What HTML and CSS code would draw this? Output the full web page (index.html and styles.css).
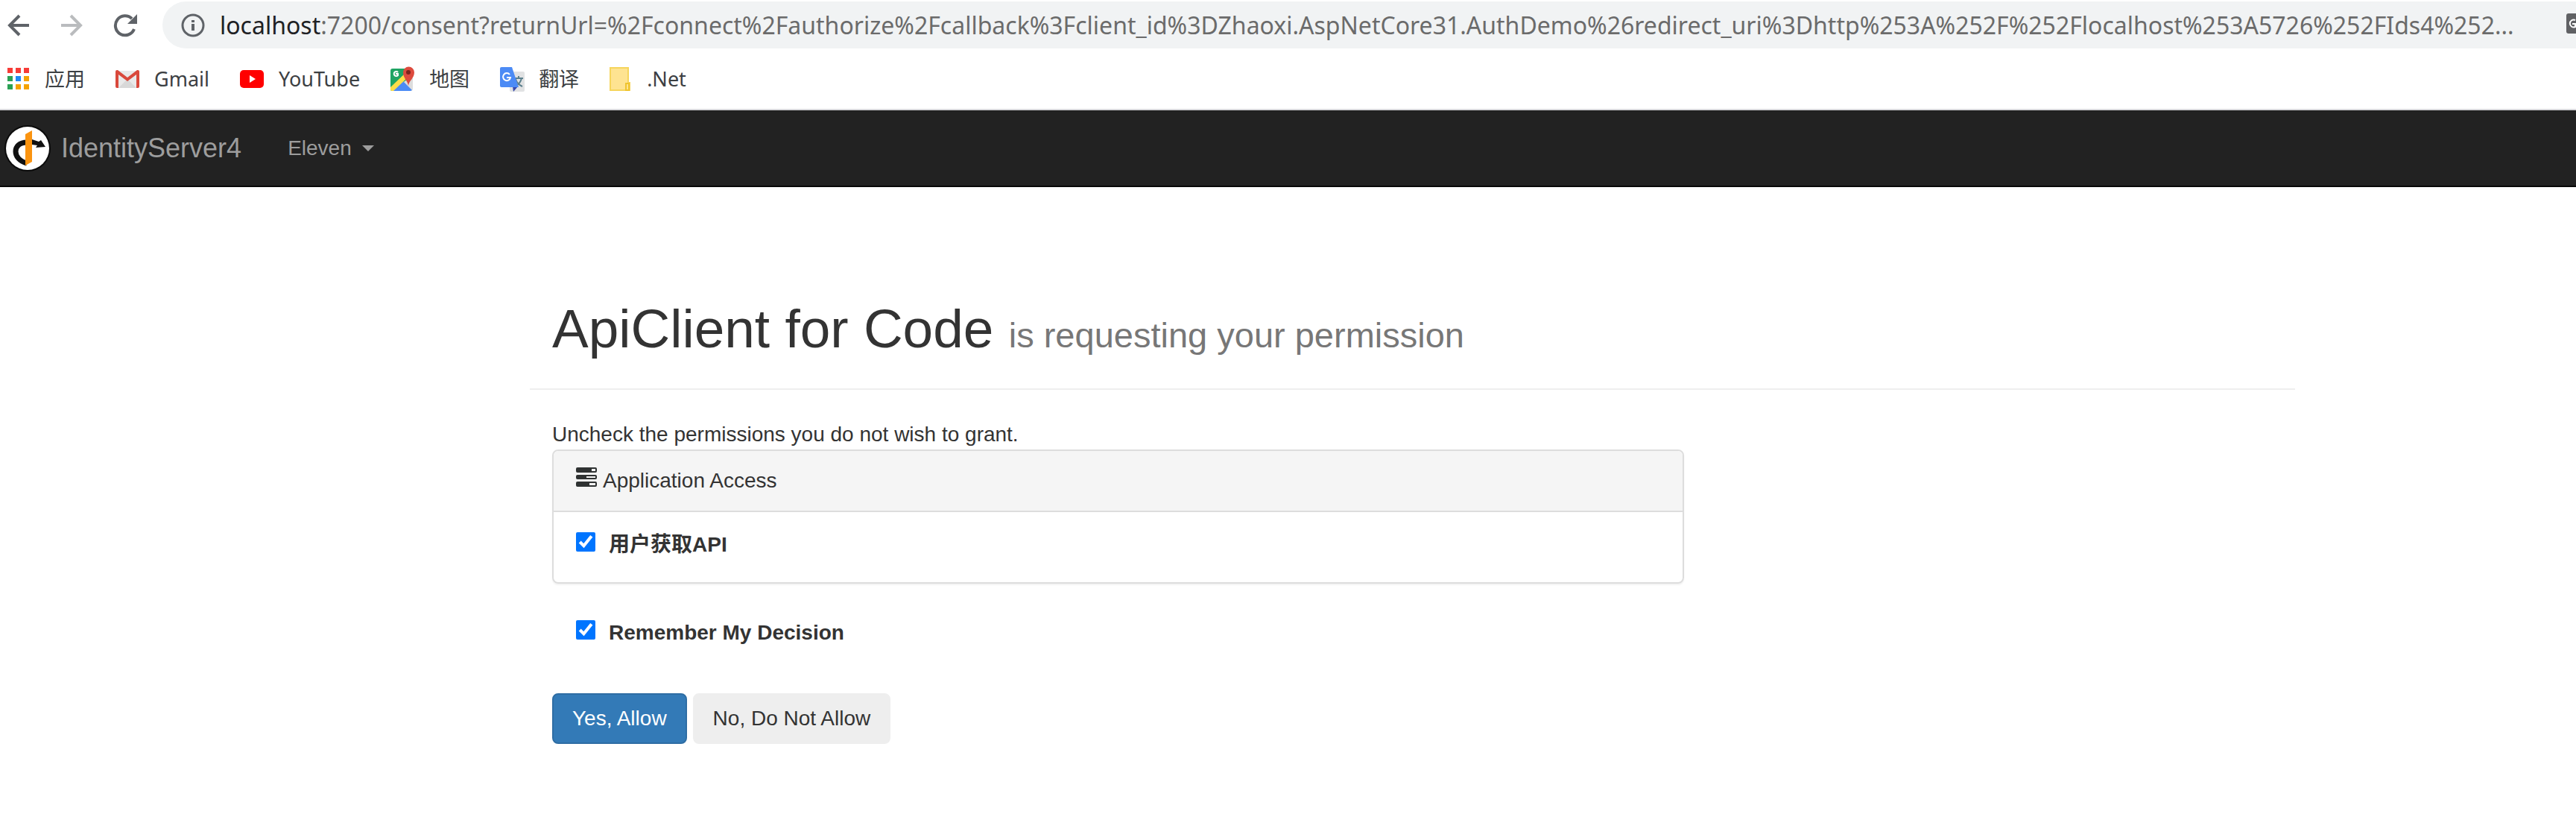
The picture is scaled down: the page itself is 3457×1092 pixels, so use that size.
FILE: index.html
```html
<!DOCTYPE html>
<html lang="en">
<head>
<meta charset="utf-8">
<meta name="viewport" content="width=device-width, initial-scale=1">
<title>IdentityServer4</title>
<link rel="stylesheet" href="styles.css">
</head>
<body>
<header class="browser">
  <div class="toolbar">
    <div class="tools">
      <button class="tool" type="button" aria-label="Back">
        <svg width="32" height="32" viewBox="0 0 32 32" fill="none" stroke="#5f6368" stroke-width="4"><path d="M31 16H5M18 3 5 16l13 13"/></svg>
      </button>
      <button class="tool" type="button" aria-label="Forward">
        <svg width="32" height="32" viewBox="0 0 32 32" fill="none" stroke="#babcbe" stroke-width="4"><path d="M2 16h26M15 3l13 13-13 13"/></svg>
      </button>
      <button class="tool" type="button" aria-label="Reload">
        <svg width="32" height="32" viewBox="0 0 32 32"><path d="M28 21A13 13 0 1 1 25 7" fill="none" stroke="#5f6368" stroke-width="4"/><path d="M32 1v13H19z" fill="#5f6368"/></svg>
      </button>
    </div>
    <div class="omnibox">
      <svg width="32" height="32" viewBox="0 0 32 32"><circle cx="16" cy="16" r="14" fill="none" stroke="#5f6368" stroke-width="3"/><path d="M14 9h4v3h-4zM14 14h4v9h-4z" fill="#5f6368"/></svg>
      <div class="url" role="textbox" aria-label="Address"><span class="host">localhost</span>:7200/consent?returnUrl=%2Fconnect%2Fauthorize%2Fcallback%3Fclient_id%3DZhaoxi.AspNetCore31.AuthDemo%26redirect_uri%3Dhttp%253A%252F%252Flocalhost%253A5726%252FIds4%252...</div>
      <svg width="13" height="34" viewBox="0 0 13 34"><path d="M3 1h10v27H3q-3 0-3-3V4q0-3 3-3z" fill="#606164"/><path d="M12 10A5 5 0 1 0 12 19V15H8" fill="none" stroke="#fff" stroke-width="2"/></svg>
    </div>
  </div>
  <nav class="bookmarks" aria-label="Bookmarks">
    <a class="bookmark" href="#">
      <svg width="32" height="32" viewBox="0 0 32 32"><path d="M1 1h7v7H1zM12 1h7v7h-7zM23 1h7v7h-7z" fill="#f73b37"/><path d="M1 12h7v7H1zM1 23h7v7H1z" fill="#2ba154"/><path d="M12 12h7v7h-7z" fill="#1e88f5"/><path d="M23 12h7v7h-7zM12 23h7v7h-7zM23 23h7v7h-7z" fill="#f5a300"/></svg>
      应用</a>
    <a class="bookmark" href="#">
      <svg width="34" height="32" viewBox="0 0 34 32"><path d="M2 5h30v23H2z" fill="#e9e9e9"/><path d="m5 28 12-12 12 12z" fill="#d8d8d8"/><path d="M1 6q0-2 2-2h1l13 10L30 4h1q2 0 2 2v20q0 2-2 2h-2V10L17 19 5 10v18H3q-2 0-2-2z" fill="#d9493c"/></svg>
      Gmail</a>
    <a class="bookmark" href="#">
      <svg width="34" height="32" viewBox="0 0 34 32"><rect x="1" y="4" width="32" height="24" rx="5" fill="#f00"/><path d="m14 11 8 5-8 5z" fill="#fff"/></svg>
      YouTube</a>
    <a class="bookmark" href="#">
      <svg width="34" height="34" viewBox="0 0 34 34"><rect x="1" y="3" width="30" height="30" rx="3" fill="#ddd"/><path d="M4 3h18v8l6 3L3 33q-2 0-2-2V6q0-3 3-3z" fill="#1fa463"/><path d="m2 32 14-14 14 14-2 1H4z" fill="#4c8bf5"/><path d="M1 28 20 10l4 5L5 33H3q-2 0-2-2z" fill="#ffde48"/><path d="M11 8a3 3 0 1 0 0 4V10H8" fill="none" stroke="#fff" stroke-width="2"/><path d="M25 26c-1-7-7-10-7-18a7 7 0 0 1 15 0c0 8-7 11-8 18z" fill="#dd4b3e"/><circle cx="25" cy="8" r="3" fill="#7d231c"/></svg>
      地图</a>
    <a class="bookmark" href="#">
      <svg width="34" height="36" viewBox="0 0 34 36"><rect x="14" y="8" width="20" height="27" rx="2" fill="#e1e2e3"/><path d="M20 17h12M26 14v3M30 17q-2 8-9 11M22 18q2 7 9 10" fill="none" stroke="#5b7f8c" stroke-width="2"/><path d="m18 28 7 0-6 7z" fill="#3749ab"/><path d="M3 2h14l9 27H3q-2 0-2-2V4q0-2 2-2z" fill="#4c8bf5"/><path d="M14 12a5 5 0 1 0 1 4h-5" fill="none" stroke="#fff" stroke-width="2"/></svg>
      翻译</a>
    <a class="bookmark" href="#">
      <svg width="32" height="34" viewBox="0 0 32 34"><path d="M2 2h24v20h2v10H2z" fill="#fee391" stroke="#f6d55c" stroke-width="2"/><rect x="23" y="23" width="4" height="9" fill="#fee391" stroke="#efc42f" stroke-width="2"/></svg>
      .Net</a>
  </nav>
</header>

<nav class="navbar">
  <a class="brand" href="#">
    <svg width="62" height="64" viewBox="0 0 62 64"><circle cx="31" cy="32" r="31" fill="#0b0b0b"/><circle cx="31" cy="32" r="29" fill="#fff"/><path d="M30 24C10 24 10 47 30 52" fill="none" stroke="#111" stroke-width="7"/><path d="m37 20 9 3 3-2 6 9-13 1 2-3-7-1z" fill="#111"/><path d="m28 13 9-5v42l-9 5z" fill="#fb9410"/></svg>
    IdentityServer4</a>
  <button class="user" type="button">Eleven <span class="caret"></span></button>
</nav>

<main class="consent">
  <div class="page-header">
    <h1>ApiClient for Code <small>is requesting your permission</small></h1>
  </div>
  <form class="form">
    <p class="hint">Uncheck the permissions you do not wish to grant.</p>
    <section class="panel">
      <div class="panel-heading">
        <svg width="28" height="28" viewBox="0 0 28 28"><g fill="#2f3232"><rect y="1" width="28" height="7" rx="2"/><rect y="11" width="28" height="6" rx="2"/><rect y="20" width="28" height="7" rx="2"/></g><path d="M21 3h5v3h-5zM14 13h12v2H14zM18 22h8v3h-8z" fill="#f5f5f5"/></svg>
        Application Access
      </div>
      <div class="panel-body">
        <label class="check"><input type="checkbox" checked>用户获取API</label>
      </div>
    </section>
    <label class="check remember"><input type="checkbox" checked>Remember My Decision</label>
    <div class="actions">
      <button class="btn btn-primary" type="button">Yes, Allow</button>
      <button class="btn" type="button">No, Do Not Allow</button>
    </div>
  </form>
</main>
</body>
</html>
```
FILE: styles.css
```css
* { box-sizing: border-box; }

body {
  margin: 0;
  background: #fff;
  color: #333;
  font: 28px/40px "Liberation Sans", "Noto Sans CJK SC", sans-serif;
}

button {
  border: 0;
  background: none;
  font: inherit;
}

svg { flex: none; display: block; }

/* Browser chrome */
.browser {
  border-bottom: 2px solid #d8d8dc;
  font-family: "Noto Sans", "Noto Sans CJK SC", sans-serif;
}

.toolbar {
  display: flex;
  align-items: center;
  gap: 34px;
  padding: 2px 0 0 8px;
}

.tools {
  display: flex;
  gap: 40px;
}

.tool { padding: 0; }

.omnibox {
  flex: 1;
  display: flex;
  align-items: center;
  height: 63px;
  padding-left: 25px;
  border-radius: 32px 0 0 32px;
  background: #f1f3f4;
}

.url {
  flex: 1;
  margin-left: 20px;
  color: #6b6b6b;
  font-size: 32px;
  white-space: nowrap;
}

.host { color: #202124; }

.bookmarks {
  display: flex;
  align-items: center;
  gap: 40px;
  height: 81px;
  padding-left: 9px;
}

.bookmark {
  display: flex;
  align-items: center;
  gap: 19px;
  color: #3c4043;
  font-size: 27px;
  text-decoration: none;
}

/* Site navigation */
.navbar {
  display: flex;
  align-items: center;
  gap: 62px;
  height: 103px;
  padding-left: 6px;
  border-bottom: 2px solid #080808;
  background: #222;
}

.brand {
  display: flex;
  align-items: center;
  gap: 14px;
  color: #9d9d9d;
  font-size: 36px;
  text-decoration: none;
}

.user {
  display: flex;
  align-items: center;
  gap: 14px;
  padding: 0;
  color: #9d9d9d;
}

.caret {
  border: 8px solid transparent;
  border-top-color: #9d9d9d;
  border-bottom: 0;
}

/* Consent page */
.consent {
  max-width: 3080px;
  padding: 150px 0 60px 711px;
}

.page-header {
  padding: 0 30px 40px;
  border-bottom: 2px solid #eee;
}

h1 {
  margin: 0;
  font-size: 73px;
  font-weight: 400;
  line-height: 80px;
}

h1 small {
  color: #777;
  font-size: 47px;
  line-height: 1;
}

.form {
  width: 66.6667%;
  padding: 40px 30px 0;
}

.hint { margin: 0; }

.panel {
  border: 2px solid #ddd;
  border-radius: 8px;
  box-shadow: 0 2px 2px rgba(0, 0, 0, .05);
}

.panel-heading {
  display: flex;
  align-items: baseline;
  gap: 8px;
  padding: 20px 30px;
  border-bottom: 2px solid #ddd;
  border-radius: 6px 6px 0 0;
  background: #f5f5f5;
}

.panel-body { padding: 24px 30px 30px; }

.check {
  display: flex;
  align-items: baseline;
  gap: 18px;
  font-weight: 700;
}

.check input {
  width: 26px;
  height: 26px;
  margin: 0;
  accent-color: #0075ff;
}

.remember { margin: 46px 32px 0; }

.actions {
  display: flex;
  gap: 8px;
  margin-top: 61px;
}

.btn {
  padding: 12px 25px;
  border: 2px solid #eee;
  border-radius: 8px;
  background: #eee;
  color: #333;
}

.btn-primary {
  border-color: #2e6da4;
  background: #337ab7;
  color: #fff;
}
```
